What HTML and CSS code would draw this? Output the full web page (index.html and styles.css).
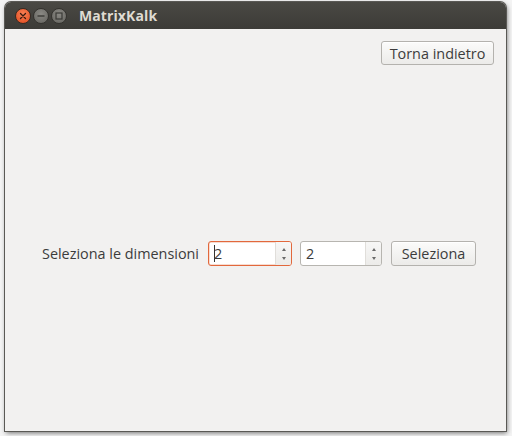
FILE: index.html
```html
<!DOCTYPE html>
<html>
<head>
<meta charset="utf-8">
<link rel="stylesheet" href="styles.css">
</head>
<body>
<div class="window">
  <div class="titlebar">
    <div class="controls">
      <span class="ctl close"><svg width="8" height="8" viewBox="0 0 8 8"><path d="M1.5 1.5 L6.5 6.5 M6.5 1.5 L1.5 6.5" stroke="#3a1a10" stroke-width="1.3" stroke-linecap="round"/></svg></span>
      <span class="ctl min"><svg width="8" height="8" viewBox="0 0 8 8"><path d="M0.5 4 H7.5" stroke="#3a3a36" stroke-width="1.4"/></svg></span>
      <span class="ctl max"><svg width="8" height="8" viewBox="0 0 8 8"><rect x="1" y="1" width="6" height="6" fill="none" stroke="#3a3a36" stroke-width="1.2"/></svg></span>
    </div>
    <span class="title">MatrixKalk</span>
  </div>
  <div class="content">
    <div class="top">
      <button class="btn back">Torna indietro</button>
    </div>
    <div class="row">
      <span class="label">Seleziona le dimensioni</span>
      <div class="spin focused">
        <span class="value"><span class="caret"></span>2</span>
        <span class="arrows"><span class="up"></span><span class="down"></span></span>
      </div>
      <div class="spin second">
        <span class="value">2</span>
        <span class="arrows"><span class="up"></span><span class="down"></span></span>
      </div>
      <button class="btn sel">Seleziona</button>
    </div>
  </div>
</div>
</body>
</html>
```
FILE: styles.css
```css
html, body {
  margin: 0;
  padding: 0;
  background: #f4f4f4;
}
body {
  width: 512px;
  height: 436px;
  overflow: hidden;
  font-family: "Open Sans", "DejaVu Sans", sans-serif;
}
.window {
  margin: 2px 6px 0 5px;
  width: 501px;
  height: 429px;
  box-sizing: border-box;
  border-radius: 6px 6px 0 0;
  box-shadow: 0 0 0 1px #5a5955, 1px 2px 5px rgba(0,0,0,0.55);
  display: flex;
  flex-direction: column;
  background: #f2f1f0;
}
.titlebar {
  height: 27px;
  flex: none;
  border-radius: 6px 6px 0 0;
  background: linear-gradient(#4a4944, #3c3b37);
  display: flex;
  align-items: center;
  padding-left: 10px;
}
.controls {
  display: flex;
  gap: 2px;
}
.ctl {
  width: 16px;
  height: 16px;
  border-radius: 50%;
  display: flex;
  align-items: center;
  justify-content: center;
  box-sizing: border-box;
}
.close {
  background: radial-gradient(circle at 50% 35%, #f98055, #e0491c);
  border: 1px solid #3a2a22;
}
.min, .max {
  background: radial-gradient(circle at 50% 35%, #8a8984, #63625d);
  border: 1px solid #34332f;
}
.title {
  margin-left: 12px;
  color: #dfdbd2;
  font-weight: bold;
  font-size: 14px;
  letter-spacing: 0.1px;
}
.content {
  flex: 1;
  display: flex;
  flex-direction: column;
  padding: 12px 12px 0 37px;
  color: #3c3c3c;
  font-size: 14.4px;
}
.top {
  display: flex;
  justify-content: flex-end;
}
.btn {
  font-family: inherit;
  font-size: 14.4px;
  color: #3c3c3c;
  height: 24px;
  padding: 0 6px;
  border: 1px solid #b4b2ae;
  border-radius: 3px;
  background: linear-gradient(#fbfbfa, #ecebe9);
  box-shadow: inset 0 1px 0 #fff;
}
.back { width: 113px; }
.row {
  margin-top: 176px;
  display: flex;
  align-items: center;
  height: 25px;
}
.label {
  width: 166px;
  flex: none;
}
.spin {
  width: 84px;
  height: 25px;
  box-sizing: border-box;
  border: 1px solid #b7b5b0;
  border-radius: 3px;
  background: #fff;
  display: flex;
  margin-right: 8px;
  flex: none;
}
.spin.second { width: 82px; }
.spin.focused {
  border-color: #e2683c;
  box-shadow: inset 0 0 0 0.5px #f0b9a3;
}
.value {
  flex: 1;
  padding-left: 5px;
  display: flex;
  align-items: center;
  color: #3c3c3c;
  font-size: 14.4px;
}
.caret {
  width: 1px;
  height: 17px;
  background: #333;
  margin-right: -1px;
}
.arrows {
  width: 15px;
  border-left: 1px solid #e0deda;
  background: linear-gradient(#f7f7f6, #ecebe9);
  display: flex;
  flex-direction: column;
  align-items: center;
  justify-content: center;
  gap: 6px;
  border-radius: 0 2px 2px 0;
}
.up, .down {
  width: 0;
  height: 0;
  border-left: 2px solid transparent;
  border-right: 2px solid transparent;
}
.up { border-bottom: 3px solid #6a6a6a; }
.down { border-top: 3px solid #6a6a6a; }
.sel {
  width: 85px;
  height: 25px;
  margin-left: 1px;
  flex: none;
}
```
